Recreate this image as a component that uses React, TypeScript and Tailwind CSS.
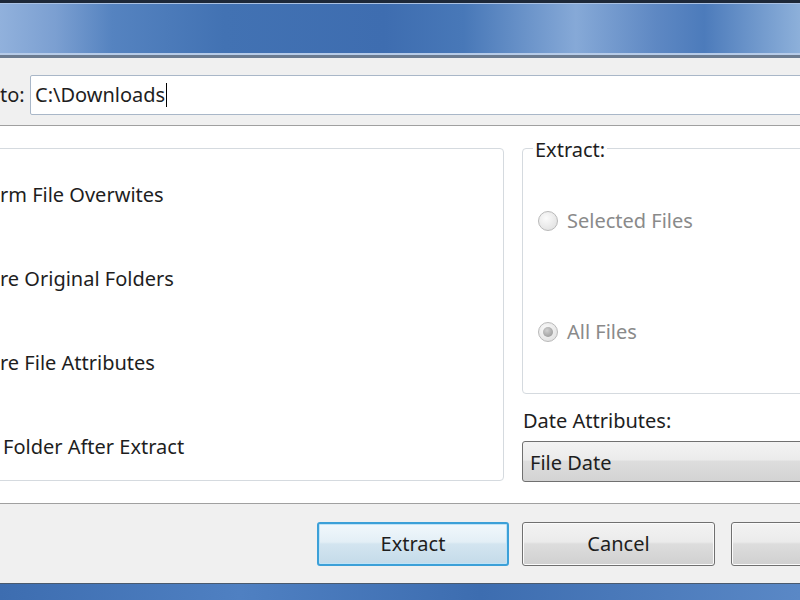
import React from "react";

const TEXT = "text-[#1e1e1e]";

function Radio({ checked, label }: { checked?: boolean; label: string }) {
  return (
    <div className="flex h-[28px] items-center">
      <span className="relative flex h-[20px] w-[20px] items-center justify-center rounded-full border border-[#b9b9b9] bg-[radial-gradient(circle_at_40%_35%,#fbfbfb,#dcdcdc)]">
        {checked && (
          <span className="h-[10px] w-[10px] rounded-full bg-[radial-gradient(circle_at_40%_35%,#d0d0d0,#8f8f8f)]" />
        )}
      </span>
      <span className="ml-[9px] text-[#8a8a8a]">{label}</span>
    </div>
  );
}

export default function App() {
  return (
    <div className="flex h-[600px] w-[800px] flex-col overflow-hidden bg-white font-['Noto_Sans',sans-serif] text-[20px] leading-[28px]">
      {/* title bar */}
      <div className="h-[3px] bg-[#1d2838]" />
      <div className="h-[50px] border-t border-[#a9c1e3] bg-[linear-gradient(90deg,#91b1dc_0%,#7b9fd1_7%,#5583c0_14%,#4272b3_28%,#3e6db0_48%,#4878b8_58%,#86a9d7_72%,#5e88c3_82%,#4c7bbb_88%,#8db0da_100%)]" />
      <div className="h-[2px] bg-[#b6cbe8]" />
      <div className="h-[3px] bg-[#6b7b90]" />

      {/* path row */}
      <div className={`flex h-[67px] bg-[#f0f0f0] pt-[17px] pb-[10px] ${TEXT}`}>
        <span className="flex h-[40px] w-[30px] items-center">to:</span>
        <div className="-mr-[20px] flex h-[40px] flex-1 items-center rounded-[2px] border border-[#a9b7c8] bg-white pl-[4px]">
          <span>C:\Downloads</span>
          <span className="ml-[1px] h-[24px] w-px bg-black" />
        </div>
      </div>
      <div className="h-px bg-[#a0a0a0]" />

      {/* options */}
      <div className={`flex h-[377px] bg-white pt-[22px] ${TEXT}`}>
        <div className="-ml-[10px] flex h-[333px] w-[514px] shrink-0 flex-col gap-[56px] rounded-[4px] border border-[#d5dadf] pt-[32px]">
          <span className="pl-[9px]">rm File Overwites</span>
          <span className="pl-[9px]">re Original Folders</span>
          <span className="pl-[9px]">re File Attributes</span>
          <span className="pl-[12px]">Folder After Extract</span>
        </div>

        <div className="-mr-[20px] ml-[18px] flex flex-1 flex-col">
          <div className="relative h-[246px] rounded-[4px] border border-[#d5dadf] pt-[58px] pl-[15px]">
            <span className="absolute -top-[13px] left-[10px] bg-white px-[2px]">Extract:</span>
            <div className="flex flex-col gap-[83px]">
              <Radio label="Selected Files" />
              <Radio checked label="All Files" />
            </div>
          </div>
          <span className="mt-[13px] pl-px">Date Attributes:</span>
          <div className="mt-[6px] flex h-[41px] items-center rounded-[3px] border border-[#707070] bg-[linear-gradient(180deg,#f3f3f3_0%,#ebebeb_45%,#dddddd_50%,#d3d3d3_100%)] pt-[2px] pl-[7px]">
            File Date
          </div>
        </div>
      </div>
      <div className="h-px bg-[#a0a0a0]" />

      {/* buttons */}
      <div className={`flex h-[79px] bg-[#f0f0f0] pt-[18px] pl-[317px] ${TEXT}`}>
        <button className="flex h-[44px] w-[192px] shrink-0 items-center justify-center rounded-[3px] border-2 border-[#3ca0d8] bg-[linear-gradient(180deg,#f1f8fc_0%,#e3eff6_45%,#d3e5f0_50%,#c4dbe9_100%)] shadow-[inset_0_0_0_1px_#bfe3f7]">
          Extract
        </button>
        <button className="ml-[13px] flex h-[44px] w-[193px] shrink-0 items-center justify-center rounded-[3px] border border-[#707070] bg-[linear-gradient(180deg,#f3f3f3_0%,#ebebeb_45%,#dddddd_50%,#d0d0d0_100%)] shadow-[inset_0_0_0_1px_#fbfbfb]">
          Cancel
        </button>
        <button className="ml-[16px] flex h-[44px] w-[193px] shrink-0 items-center justify-center rounded-[3px] border border-[#707070] bg-[linear-gradient(180deg,#f3f3f3_0%,#ebebeb_45%,#dddddd_50%,#d0d0d0_100%)] shadow-[inset_0_0_0_1px_#fbfbfb]" />
      </div>

      {/* bottom frame */}
      <div className="h-px bg-[#4a5a6e]" />
      <div className="h-[16px] bg-[linear-gradient(90deg,#3d6db0_0%,#4f80c2_30%,#3d6db0_60%,#5a88c6_100%)]" />
    </div>
  );
}
